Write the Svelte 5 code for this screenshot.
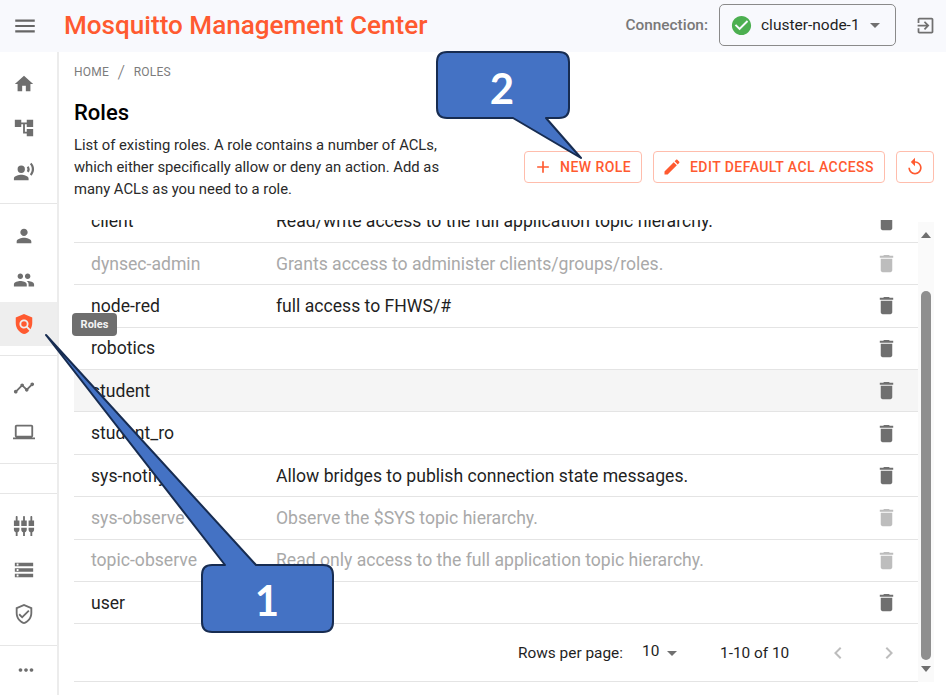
<script lang="ts">
	// material icon paths
	const icons: Record<string, string> = {
		menu: 'M3 18h18v-2H3v2zm0-5h18v-2H3v2zm0-7v2h18V6H3z',
		home: 'M10 20v-6h4v6h5v-8h3L12 3 2 12h3v8z',
		tree: 'M22 11V3h-7v3H9V3H2v8h7V8h2v10h4v3h7v-8h-7v3h-2V8h2v3z',
		voice: 'M9 5a4 4 0 1 0 0 8a4 4 0 1 0 0-8zM9 15c-2.67 0-8 1.34-8 4v2h16v-2c0-2.66-5.33-4-8-4zm7.76-9.64l-1.68 1.69c.84 1.18.84 2.71 0 3.89l1.68 1.69c2.02-2.02 2.02-5.07 0-7.27zM20.07 2l-1.63 1.63c2.77 3.02 2.77 7.56 0 10.74L20.07 16c3.9-3.89 3.91-9.95 0-14z',
		person: 'M12 12c2.21 0 4-1.79 4-4s-1.79-4-4-4-4 1.79-4 4 1.79 4 4 4zm0 2c-2.67 0-8 1.34-8 4v2h16v-2c0-2.66-5.33-4-8-4z',
		people: 'M16 11c1.66 0 2.99-1.34 2.99-3S17.66 5 16 5c-1.66 0-3 1.34-3 3s1.34 3 3 3zm-8 0c1.66 0 2.99-1.34 2.99-3S9.66 5 8 5C6.34 5 5 6.34 5 8s1.34 3 3 3zm0 2c-2.33 0-7 1.17-7 3.5V19h14v-2.5c0-2.33-4.67-3.5-7-3.5zm8 0c-.29 0-.62.02-.97.05 1.16.84 1.97 1.97 1.97 3.45V19h6v-2.5c0-2.33-4.67-3.5-7-3.5z',
		policy: 'M12 9a3 3 0 1 0 0 6a3 3 0 1 0 0-6zM21 5l-9-4-9 4v6c0 5.55 3.84 10.74 9 12 2.3-.56 4.33-1.9 5.88-3.71l-3.12-3.12c-1.94 1.29-4.58 1.07-6.29-.64-1.95-1.95-1.95-5.12 0-7.07 1.95-1.95 5.12-1.95 7.07 0 1.71 1.71 1.92 4.35.64 6.29l2.9 2.9C20.29 15.69 21 13.38 21 11V5z',
		timeline: 'M23 8c0 1.1-.9 2-2 2-.18 0-.35-.02-.51-.07l-3.56 3.55c.05.16.07.34.07.52 0 1.1-.9 2-2 2s-2-.9-2-2c0-.18.02-.36.07-.52l-2.55-2.55c-.16.05-.34.07-.52.07s-.36-.02-.52-.07l-4.55 4.56c.05.16.07.33.07.51 0 1.1-.9 2-2 2s-2-.9-2-2 .9-2 2-2c.18 0 .35.02.51.07l4.56-4.55C8.02 9.36 8 9.18 8 9c0-1.1.9-2 2-2s2 .9 2 2c0 .18-.02.36-.07.52l2.55 2.55c.16-.05.34-.07.52-.07s.36.02.52.07l3.55-3.56C19.02 8.35 19 8.18 19 8c0-1.1.9-2 2-2s2 .9 2 2z',
		laptop: 'M20 18c1.1 0 1.99-.9 1.99-2L22 6c0-1.1-.9-2-2-2H4c-1.1 0-2 .9-2 2v10c0 1.1.9 2 2 2H0v2h24v-2h-4zM4 6h16v10H4V6z',
		inputs: 'M5 2c0-.55-.45-1-1-1s-1 .45-1 1v4H1v6h6V6H5V2zm4 14c0 1.3.84 2.4 2 2.82V23h2v-4.18c1.16-.41 2-1.51 2-2.82v-2H9v2zm-8 0c0 1.3.84 2.4 2 2.82V23h2v-4.18C6.16 18.4 7 17.3 7 16v-2H1v2zM21 6V2c0-.55-.45-1-1-1s-1 .45-1 1v4h-2v6h6V6h-2zm-8-4c0-.55-.45-1-1-1s-1 .45-1 1v4H9v6h6V6h-2V2zm4 14c0 1.3.84 2.4 2 2.82V23h2v-4.18c1.16-.41 2-1.51 2-2.82v-2h-6v2z',
		storage: 'M2 20h20v-4H2v4zm2-3h2v2H4v-2zM2 4v4h20V4H2zm4 3H4V5h2v2zm-4 7h20v-4H2v4zm2-3h2v2H4v-2z',
		shield: 'M12 1L3 5v6c0 5.55 3.84 10.74 9 12 5.16-1.26 9-6.45 9-12V5l-9-4zm7 10c0 4.52-2.98 8.69-7 9.93-4.02-1.24-7-5.41-7-9.93V6.3l7-3.11 7 3.11V11zm-11.59.59L6 13l4 4 8-8-1.41-1.42L10 14.17z',
		more: 'M6 10c-1.1 0-2 .9-2 2s.9 2 2 2 2-.9 2-2-.9-2-2-2zm12 0c-1.1 0-2 .9-2 2s.9 2 2 2 2-.9 2-2-.9-2-2-2zm-6 0c-1.1 0-2 .9-2 2s.9 2 2 2 2-.9 2-2-.9-2-2-2z',
		add: 'M19 13h-6v6h-2v-6H5v-2h6V5h2v6h6v2z',
		edit: 'M3 17.25V21h3.75L17.81 9.94l-3.75-3.75L3 17.25zM20.71 7.04c.39-.39.39-1.02 0-1.41l-2.34-2.34c-.39-.39-1.02-.39-1.41 0l-1.83 1.83 3.75 3.75 1.83-1.83z',
		replay: 'M12 5V1L7 6l5 5V7c3.31 0 6 2.69 6 6s-2.69 6-6 6-6-2.69-6-6H4c0 4.42 3.58 8 8 8s8-3.58 8-8-3.58-8-8-8z',
		trash: 'M6 19c0 1.1.9 2 2 2h8c1.1 0 2-.9 2-2V7H6v12zM19 4h-3.5l-1-1h-5l-1 1H5v2h14V4z',
		check: 'M12 2C6.48 2 2 6.48 2 12s4.48 10 10 10 10-4.48 10-10S17.52 2 12 2zm-2 15l-5-5 1.41-1.41L10 14.17l7.59-7.59L19 8l-9 9z',
		exit: 'M10.09 15.59L11.5 17l5-5-5-5-1.41 1.41L12.67 11H3v2h9.67l-2.58 2.59zM19 3H5c-1.11 0-2 .9-2 2v4h2V5h14v14H5v-4H3v4c0 1.1.89 2 2 2h14c1.1 0 2-.9 2-2V5c0-1.1-.9-2-2-2z',
		left: 'M15.41 7.41L14 6l-6 6 6 6 1.41-1.41L10.83 12z',
		right: 'M10 6L8.59 7.41 13.17 12l-4.58 4.59L10 18l6-6z',
		drop: 'M7 10l5 5 5-5z'
	};

	const navGroups = [
		['home', 'tree', 'voice'],
		['person', 'people', 'policy'],
		['timeline', 'laptop'],
		[],
		['inputs', 'storage', 'shield']
	];

	const roles = [
		{ name: 'client', text: 'Read/write access to the full application topic hierarchy.' },
		{ name: 'dynsec-admin', text: 'Grants access to administer clients/groups/roles.', off: true },
		{ name: 'node-red', text: 'full access to FHWS/#' },
		{ name: 'robotics', text: '' },
		{ name: 'student', text: '', hover: true },
		{ name: 'student_ro', text: '' },
		{ name: 'sys-notify', text: 'Allow bridges to publish connection state messages.' },
		{ name: 'sys-observe', text: 'Observe the $SYS topic hierarchy.', off: true },
		{ name: 'topic-observe', text: 'Read only access to the full application topic hierarchy.', off: true },
		{ name: 'user', text: '' }
	];
</script>

{#snippet icon(name: string, size = 24)}
	<svg class="icon" width={size} height={size} viewBox="0 0 24 24"><path d={icons[name]} /></svg>
{/snippet}

<div class="page">
	<header class="appbar">
		<span class="burger">{@render icon('menu', 26)}</span>
		<h1>Mosquitto Management Center</h1>
		<span class="conn-label">Connection:</span>
		<div class="conn-select">
			<span class="ok">{@render icon('check', 23)}</span>
			<span class="conn-name">cluster-node-1</span>
			<span class="caret">{@render icon('drop', 24)}</span>
		</div>
		<span class="exit">{@render icon('exit', 21)}</span>
	</header>

	<div class="body">
		<nav class="sidebar">
			{#each navGroups as group}
				<div class="group" class:spacer={group.length === 0}>
					{#each group as name}
						<div class="item" class:active={name === 'policy'}>{@render icon(name, 22)}</div>
					{/each}
				</div>
			{/each}
			<div class="item last">{@render icon('more', 22)}</div>
		</nav>

		<main class="content">
			<div class="crumbs"><span>HOME</span><i>/</i><span>ROLES</span></div>
			<div class="head">
				<div class="intro">
					<h2>Roles</h2>
					<p>List of existing roles. A role contains a number of ACLs, which either specifically allow or deny an action. Add as many ACLs as you need to a role.</p>
				</div>
				<div class="actions">
					<button class="new">{@render icon('add', 20)}<span>NEW ROLE</span></button>
					<button class="edit">{@render icon('edit', 20)}<span>EDIT DEFAULT ACL ACCESS</span></button>
					<button class="reload">{@render icon('replay', 20)}</button>
				</div>
			</div>

			<div class="table-wrap">
				<div class="table">
					<div class="rows">
						{#each roles as role}
							<div class="row" class:off={role.off} class:hover={role.hover}>
								<span class="name">{role.name}</span>
								<span class="desc">{role.text}</span>
								<span class="del">{@render icon('trash', 23)}</span>
							</div>
						{/each}
					</div>
					<div class="pager">
						<span class="rpp">Rows per page:</span>
						<span class="size">10</span>
						<span class="size-caret">{@render icon('drop', 24)}</span>
						<span class="range">1-10 of 10</span>
						<span class="nav-a">{@render icon('left', 24)}</span>
						<span class="nav-b">{@render icon('right', 24)}</span>
					</div>
				</div>
				<div class="scrollbar">
					<svg class="arrow" width="10" height="6" viewBox="0 0 10 6"><path d="M0 6L5 0l5 6z" /></svg>
					<div class="track"><div class="thumb"></div></div>
					<svg class="arrow" width="10" height="6" viewBox="0 0 10 6"><path d="M0 0l5 6 5-6z" /></svg>
				</div>
			</div>
		</main>
	</div>

	<div class="tooltip">Roles</div>

	<svg class="callouts" width="946" height="695" viewBox="0 0 946 695">
		<path d="M212 565L225 565L46 335L256 565L323 565Q333 565 333 575L333 622Q333 632 323 632L212 632Q202 632 202 622L202 575Q202 565 212 565Z" />
		<text x="267" y="616">1</text>
		<path d="M447 52L559 52Q569 52 569 62L569 108Q569 118 559 118L546 118L581 158L513 118L447 118Q437 118 437 108L437 62Q437 52 447 52Z" />
		<text x="502" y="104">2</text>
	</svg>
</div>

<style>
	:global(body) {
		margin: 0;
		background: #fff;
	}

	.page {
		position: relative;
		width: 946px;
		height: 695px;
		overflow: hidden;
		display: flex;
		flex-direction: column;
		font-family: Roboto, 'Liberation Sans', sans-serif;
		color: #1f1f1f;
	}

	.icon {
		display: block;
		fill: currentColor;
	}

	/* app bar */
	.appbar {
		height: 52px;
		flex: none;
		display: flex;
		align-items: center;
		padding-right: 10px;
		background: #f8f9fd;
	}

	.burger {
		margin-left: 12px;
		color: #666;
	}

	h1 {
		margin: 0 0 2px 26px;
		font-size: 26.1px;
		font-weight: 500;
		color: #ff5a30;
		flex: 1;
	}

	.conn-label {
		font-size: 15.4px;
		font-weight: 500;
		color: #787878;
		margin-right: 11px;
		margin-bottom: 2px;
	}

	.conn-select {
		width: 177px;
		height: 42px;
		box-sizing: border-box;
		margin-bottom: 2px;
		border: 1px solid #8a8a8a;
		border-radius: 5px;
		display: flex;
		align-items: center;
		padding-left: 10px;
	}

	.ok {
		color: #4caf50;
	}

	.conn-name {
		margin-left: 8px;
		font-size: 15.5px;
		width: 98px;
		white-space: nowrap;
	}

	.caret {
		margin-left: 4px;
		color: #707070;
	}

	.exit {
		margin-left: 19px;
		margin-bottom: 1px;
		color: #707070;
	}

	.body {
		flex: 1;
		display: flex;
		min-height: 0;
	}

	/* sidebar */
	.sidebar {
		width: 59px;
		box-sizing: border-box;
		flex: none;
		border-right: 2px solid #ececec;
	}

	.group {
		padding: 10px 0 9px;
		border-bottom: 1px solid #e6e6e6;
	}

	.group.spacer {
		height: 30px;
		padding: 0;
		box-sizing: border-box;
	}

	.item {
		height: 44px;
		display: flex;
		align-items: center;
		padding-left: 13px;
		color: #6e6e6e;
	}

	.item.active {
		background: #eeeeee;
		color: #ff5a30;
	}

	.item.last {
		margin-top: 2px;
		padding-left: 15px;
	}

	/* main area */
	.content {
		flex: 1;
		min-width: 0;
		padding: 0 12px 0 15px;
		display: flex;
		flex-direction: column;
	}

	.crumbs {
		height: 39px;
		display: flex;
		align-items: center;
		font-size: 12px;
		color: #7c7c7c;
		letter-spacing: 0.2px;
	}

	.crumbs i {
		font-style: normal;
		font-size: 19px;
		margin: 0 8.5px;
		font-weight: 300;
	}

	.head {
		display: flex;
		align-items: flex-end;
		justify-content: space-between;
		height: 108px;
		flex: none;
	}

	h2 {
		margin: 9px 0 8px;
		font-size: 22px;
		font-weight: 500;
		line-height: 26px;
		color: #000;
	}

	.intro {
		width: 372px;
		align-self: flex-start;
	}

	.intro p {
		margin: 0;
		font-size: 14.8px;
		line-height: 22px;
		color: #2a2a2a;
	}

	.actions {
		display: flex;
		gap: 11px;
		margin-bottom: 16px;
	}

	button {
		height: 32px;
		display: flex;
		align-items: center;
		box-sizing: border-box;
		background: #fff;
		border: 1px solid #ffbdac;
		border-radius: 4px;
		color: #ff5a30;
		font-family: inherit;
		font-size: 14px;
		font-weight: 500;
		letter-spacing: 0.45px;
		white-space: nowrap;
	}

	button.new {
		width: 118px;
		padding: 0 0 0 8px;
		gap: 7px;
	}

	button.edit {
		width: 232px;
		padding: 0 0 0 8px;
		gap: 8px;
	}

	button.reload {
		width: 38px;
		padding: 0 8px;
	}

	/* table, scrolled so that the first row is cut off by the head */
	.table-wrap {
		flex: 1;
		min-height: 0;
		display: flex;
		overflow: hidden;
		margin-top: 21px;
	}

	.table {
		flex: 1;
		min-width: 0;
		margin-top: -19.5px;
	}

	.row {
		height: 42.4px;
		box-sizing: border-box;
		display: flex;
		align-items: center;
		border-bottom: 1px solid #e4e4e4;
		font-size: 17.6px;
		padding-left: 17px;
	}

	.row.off {
		color: #a9a9a9;
	}

	.row.hover {
		background: #f5f5f5;
	}

	.name {
		width: 185px;
		flex: none;
	}

	.desc {
		flex: 1;
	}

	.del {
		margin-right: 20px;
		color: #6f6f6f;
	}

	.row.off .del {
		color: #bdbdbd;
	}

	.pager {
		height: 58px;
		box-sizing: border-box;
		display: flex;
		align-items: center;
		font-size: 15.4px;
		border-bottom: 1px solid #e4e4e4;
		padding-left: 444px;
	}

	.rpp {
		width: 124px;
		flex: none;
	}

	.size {
		width: 18px;
		flex: none;
		margin-bottom: 3px;
	}

	.size-caret {
		color: #707070;
		width: 60px;
		flex: none;
	}

	.range {
		width: 106px;
		flex: none;
	}

	.nav-a,
	.nav-b {
		color: #bdbdbd;
		width: 51px;
		flex: none;
	}

	/* scrollbar */
	.scrollbar {
		width: 16px;
		flex: none;
		margin-top: 2px;
		margin-bottom: 13px;
		background: #fafafa;
		display: flex;
		flex-direction: column;
		align-items: center;
		padding: 10px 0;
		box-sizing: border-box;
	}

	.arrow {
		flex: none;
		fill: #6f6f6f;
	}

	.track {
		flex: 1;
		width: 10px;
		padding: 53px 0 6px;
		box-sizing: border-box;
		display: flex;
	}

	.thumb {
		flex: 1;
		background: #8f8f8f;
		border-radius: 5px;
	}

	/* overlays */
	.tooltip {
		position: absolute;
		left: 72px;
		top: 313px;
		width: 45px;
		height: 23px;
		border-radius: 4px;
		background: #6e6e6e;
		color: #f4f4f4;
		font-size: 11px;
		font-weight: 700;
		display: flex;
		align-items: center;
		justify-content: center;
	}

	.callouts {
		position: absolute;
		left: 0;
		top: 0;
		pointer-events: none;
	}

	.callouts path {
		fill: #4472c4;
		stroke: #172c51;
		stroke-width: 2;
		stroke-linejoin: round;
	}

	.callouts text {
		font-family: Lato, 'Open Sans', sans-serif;
		font-weight: 700;
		font-size: 42px;
		fill: #fff;
		text-anchor: middle;
	}
</style>
